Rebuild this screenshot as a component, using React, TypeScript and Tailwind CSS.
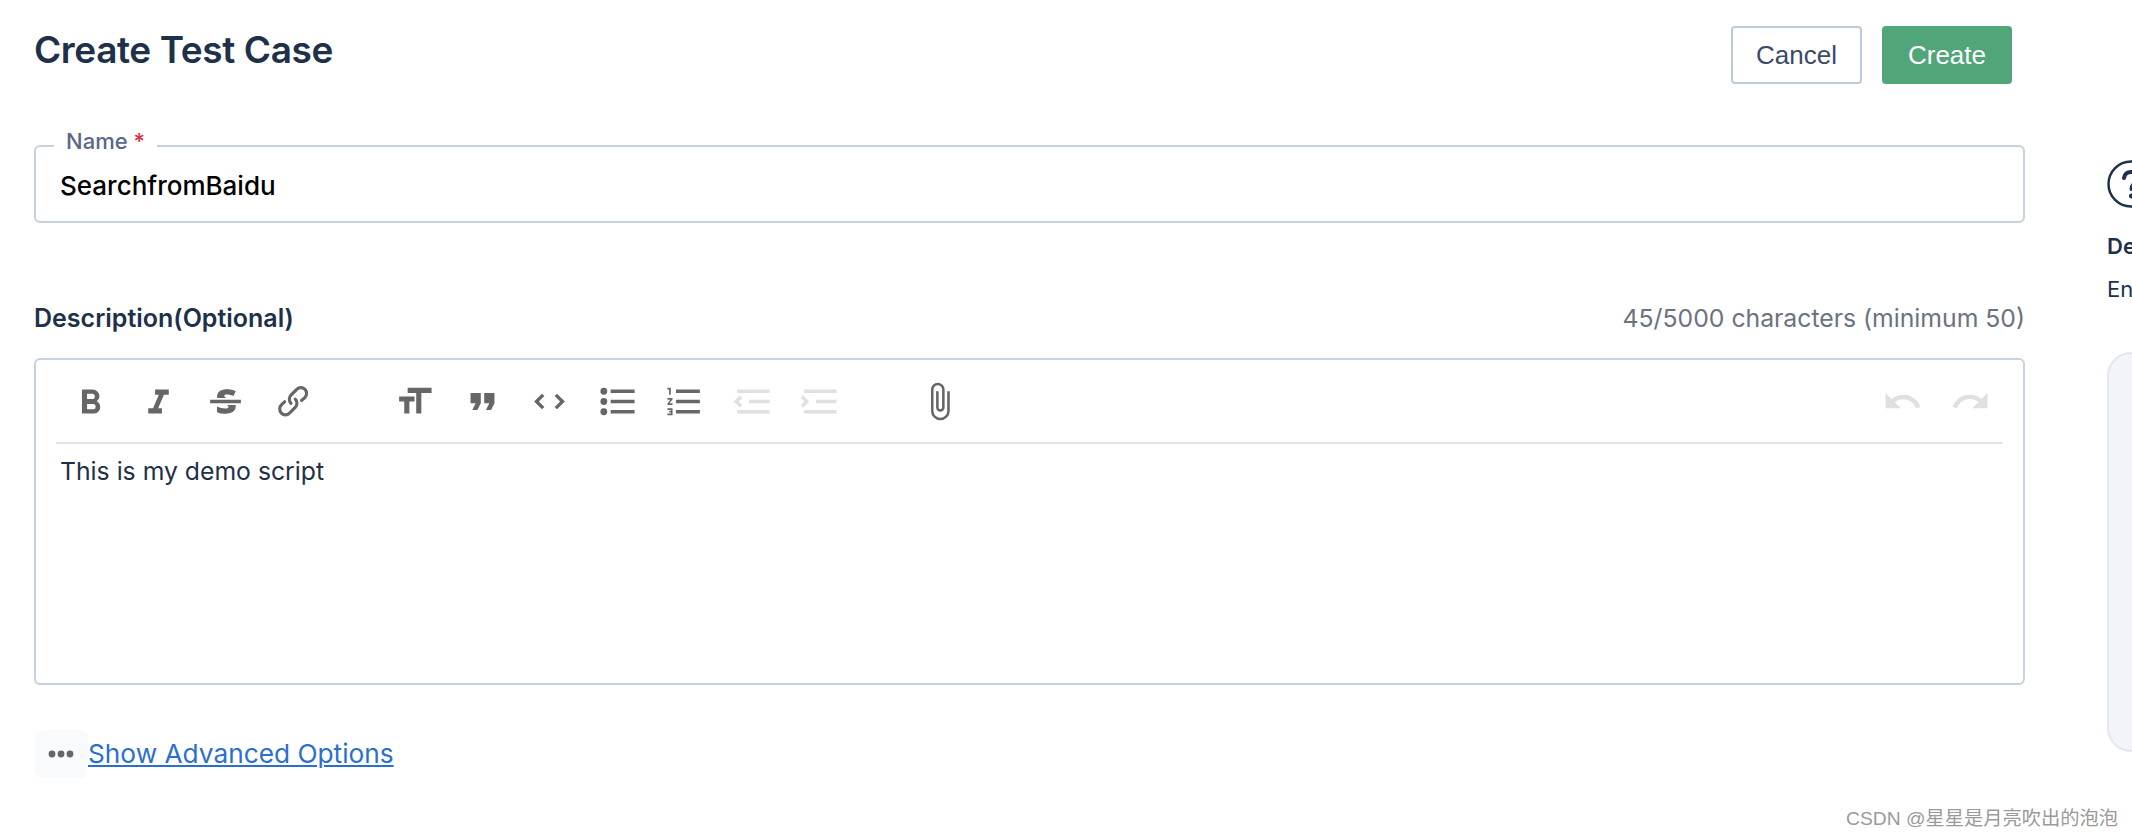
const TEXT_GROUP = [
  "M15.6 11.8c1-.7 1.6-1.8 1.6-2.8a4 4 0 0 0-4-4H7v14h7c2.1 0 3.7-1.7 3.7-3.8 0-1.5-.8-2.8-2.1-3.4zM10 7.5h3a1.5 1.5 0 1 1 0 3h-3v-3zm3.5 9H10v-3h3.5a1.5 1.5 0 1 1 0 3z",
  "M10 5v3h2.2l-3.4 8H6v3h8v-3h-2.2l3.4-8H18V5h-8z",
  "M12.73 14l.28.14c.26.15.45.3.57.44.12.14.18.3.18.5 0 .3-.15.56-.44.75-.3.2-.76.3-1.39.3A13.52 13.52 0 0 1 7 14.95v3.37a10.64 10.64 0 0 0 4.84.88c1.26 0 2.35-.19 3.28-.56.93-.37 1.64-.9 2.14-1.57s.74-1.45.74-2.32c0-.26-.02-.51-.06-.75h-5.21zm-5.5-4c-.08-.34-.12-.7-.12-1.1 0-1.29.52-2.3 1.58-3.02 1.05-.72 2.5-1.08 4.34-1.08 1.62 0 3.28.34 4.97 1l-1.3 2.93c-1.47-.6-2.73-.9-3.8-.9-.55 0-.96.08-1.2.26-.26.17-.38.38-.38.64 0 .27.16.52.48.74.17.12.53.3 1.05.53H7.23zM3 13h18v-2H3v2z",
  "M9.88 13.7a4.3 4.3 0 0 1 0-6.07l3.37-3.37a4.26 4.26 0 0 1 6.07 0 4.3 4.3 0 0 1 0 6.06l-1.96 1.72a.91.91 0 1 1-1.3-1.3l1.97-1.71a2.46 2.46 0 0 0-3.48-3.48l-3.38 3.37a2.46 2.46 0 0 0 0 3.48.91.91 0 1 1-1.3 1.3z M4.25 19.46a4.3 4.3 0 0 1 0-6.07l1.93-1.9a.91.91 0 1 1 1.3 1.3l-1.93 1.9a2.46 2.46 0 0 0 3.48 3.48l3.37-3.38c.96-.96.96-2.52 0-3.48a.91.91 0 1 1 1.3-1.3 4.3 4.3 0 0 1 0 6.07l-3.38 3.38a4.26 4.26 0 0 1-6.07 0z",
];

const BLOCK_GROUP = [
  { d: "M12 9v3H9v7H6v-7H3V9h9zM8 4h14v3h-6v12h-3V7H8V4z" },
  { d: "M6 17h3l2-4V7H5v6h3zm8 0h3l2-4V7h-6v6h3z" },
  { d: "M18.2 12L15 15.2l1.4 1.4L21 12l-4.6-4.6L15 8.8l3.2 3.2zM5.8 12L9 8.8 7.6 7.4 3 12l4.6 4.6L9 15.2 5.8 12z" },
  { d: "M4 4a2 2 0 1 0 0 4 2 2 0 0 0 0-4zm0 6a2 2 0 1 0 0 4 2 2 0 0 0 0-4zm0 6a2 2 0 1 0 0 4 2 2 0 0 0 0-4zm4 3h14v-2H8v2zm0-6h14v-2H8v2zm0-8v2h14V5H8z" },
  { d: "M2 17h2v.5H3v1h1v.5H2v1h3v-4H2v1zm1-9h1V4H2v1h1v3zm-1 3h1.8L2 13.1v.9h3v-1H3.2L5 10.9V10H2v1zm5-6v2h14V5H7zm0 14h14v-2H7v2zm0-6h14v-2H7v2z" },
  { d: "M3 19h19v-2H3v2zm7-6h12v-2H10v2zm-8.3-.3l2.8 2.9L6 14.2 4 12l2-2-1.4-1.5L1 12l.7.7zM3 5v2h19V5H3z", disabled: true },
  { d: "M3 19h19v-2H3v2zm7-6h12v-2H10v2zm-6.9-1L1 14.2l1.4 1.4L6 12l-.7-.7-2.9-2.9L1 9.8 3.1 12zM3 5v2h19V5H3z", disabled: true },
];

const ATTACH = "M16.5 6v11.5a4 4 0 1 1-8 0V5a2.5 2.5 0 0 1 5 0v10.5a1 1 0 1 1-2 0V6H10v9.5a2.5 2.5 0 0 0 5 0V5a4 4 0 1 0-8 0v12.5a5.5 5.5 0 0 0 11 0V6h-1.5z";
const UNDO = "M12.5 8c-2.6 0-5 1-6.9 2.6L2 7v9h9l-3.6-3.6A8 8 0 0 1 20 16l2.4-.8a10.5 10.5 0 0 0-10-7.2z";
const REDO = "M18.4 10.6a10.5 10.5 0 0 0-16.9 4.6L4 16a8 8 0 0 1 12.7-3.6L13 16h9V7l-3.6 3.6z";

function ToolButton({ d, disabled }: { d: string; disabled?: boolean }) {
  return (
    <button type="button" className="flex h-[41px] w-[67.5px] items-center justify-center">
      <svg viewBox="0 0 24 24" className={`h-[41px] w-[41px] ${disabled ? "fill-[#e0e0e0]" : "fill-[#666666]"}`}>
        <path d={d} />
      </svg>
    </button>
  );
}

export default function App() {
  return (
    <div className="relative flex h-[838px] w-[2132px] overflow-hidden bg-white font-['Inter',sans-serif]">
      {/* Form column */}
      <div className="ml-[34px] flex w-[1991px] shrink-0 flex-col">
        {/* Header */}
        <div className="flex items-start justify-between pr-[13px] pt-[26px]">
          <h1 className="text-[37px] font-semibold leading-[48px] tracking-[-0.4px] text-[#1e3148]">Create Test Case</h1>
          <div className="flex gap-5 font-['Liberation_Sans',sans-serif] text-[26px]">
            <button type="button" className="h-[58px] w-[131px] rounded-[4px] border-2 border-[#bccada] text-[#3b4a68]">
              Cancel
            </button>
            <button type="button" className="h-[58px] w-[130px] rounded-[4px] bg-[#50a678] text-white">
              Create
            </button>
          </div>
        </div>

        {/* Name */}
        <div className="relative mt-[61px] flex h-[78px] items-center rounded-[6px] border-2 border-[#c6d2de] pl-[24px] pt-[2px]">
          <label className="absolute left-[18px] top-[-21px] bg-white px-[12px] text-[22px] font-medium leading-[30px] text-[#5a6785]">
            Name <span className="text-[#d6333c]">*</span>
          </label>
          <span className="text-[26px] font-medium text-black">SearchfromBaidu</span>
        </div>

        {/* Description */}
        <div className="mt-[79px] flex items-center justify-between">
          <span className="text-[25px] font-semibold leading-[32px] text-[#1e3148]">Description(Optional)</span>
          <span className="text-[24.750px] leading-[32px] text-[#6b7280]">45/5000 characters (minimum 50)</span>
        </div>

        <div className="mt-[24px] flex h-[327px] flex-col rounded-[6px] border-2 border-[#c6d2de] px-[20px] pt-[21px]">
          <div className="flex h-[63px] items-start border-b-2 border-[#dfe4ea] pl-[1px]">
            <div className="flex">
              {TEXT_GROUP.map((d) => (
                <ToolButton key={d} d={d} />
              ))}
            </div>
            <div className="ml-[54px] flex">
              {BLOCK_GROUP.map((b) => (
                <ToolButton key={b.d} d={b.d} disabled={b.disabled} />
              ))}
            </div>
            <div className="ml-[52px]">
              <ToolButton d={ATTACH} />
            </div>
            <div className="-mr-[1px] ml-auto flex">
              <ToolButton d={UNDO} disabled />
              <ToolButton d={REDO} disabled />
            </div>
          </div>
          <p className="pl-[4px] pt-[11px] text-[24.750px] leading-[32px] text-[#1e3148]">This is my demo script</p>
        </div>

        {/* Advanced options */}
        <div className="mt-[45px] flex items-center">
          <div className="flex h-[48px] w-[54px] items-center justify-center rounded-[8px] bg-[#f8fafc]">
            <svg viewBox="0 0 26 8" className="h-[8px] w-[26px] fill-[#666666]">
              <circle cx="4" cy="4" r="3.4" />
              <circle cx="13" cy="4" r="3.4" />
              <circle cx="22" cy="4" r="3.4" />
            </svg>
          </div>
          <a href="#" className="text-[26.250px] text-[#2b6fce] underline">
            Show Advanced Options
          </a>
        </div>
      </div>

      {/* Side panel, cut off by the window */}
      <div className="ml-[82px] flex w-[400px] shrink-0 flex-col">
        <svg viewBox="0 0 48 48" className="mt-[160px] h-[48px] w-[48px] shrink-0 fill-none stroke-[#1e3148] stroke-[2.5]">
          <circle cx="24" cy="24" r="22.5" />
          <path d="M17 18c.6-4 3.5-6 7-6 4 0 7 2.4 7 6 0 5-6.500 5-6.500 11" strokeLinecap="round" strokeWidth="4" />
          <circle cx="24.500" cy="36" r="2.500" className="fill-[#1e3148] stroke-none" />
        </svg>
        <span className="mt-[24px] text-[22px] font-semibold leading-[28px] text-[#1e3148]">De</span>
        <span className="mt-[15px] text-[22px] leading-[28px] text-[#1e3148]">En</span>
        <div className="mt-[49px] h-[400px] rounded-[24px] border-2 border-[#e4e7ec] bg-[#f1f4f8]" />
      </div>

      {/* CSDN watermark */}
      <span className="absolute left-[1846px] top-[807px] font-['Liberation_Sans','Noto_Sans_CJK_SC',sans-serif] text-[19.250px] leading-[24px] text-[#9a9a9a]">
        CSDN @星星是月亮吹出的泡泡
      </span>
    </div>
  );
}
